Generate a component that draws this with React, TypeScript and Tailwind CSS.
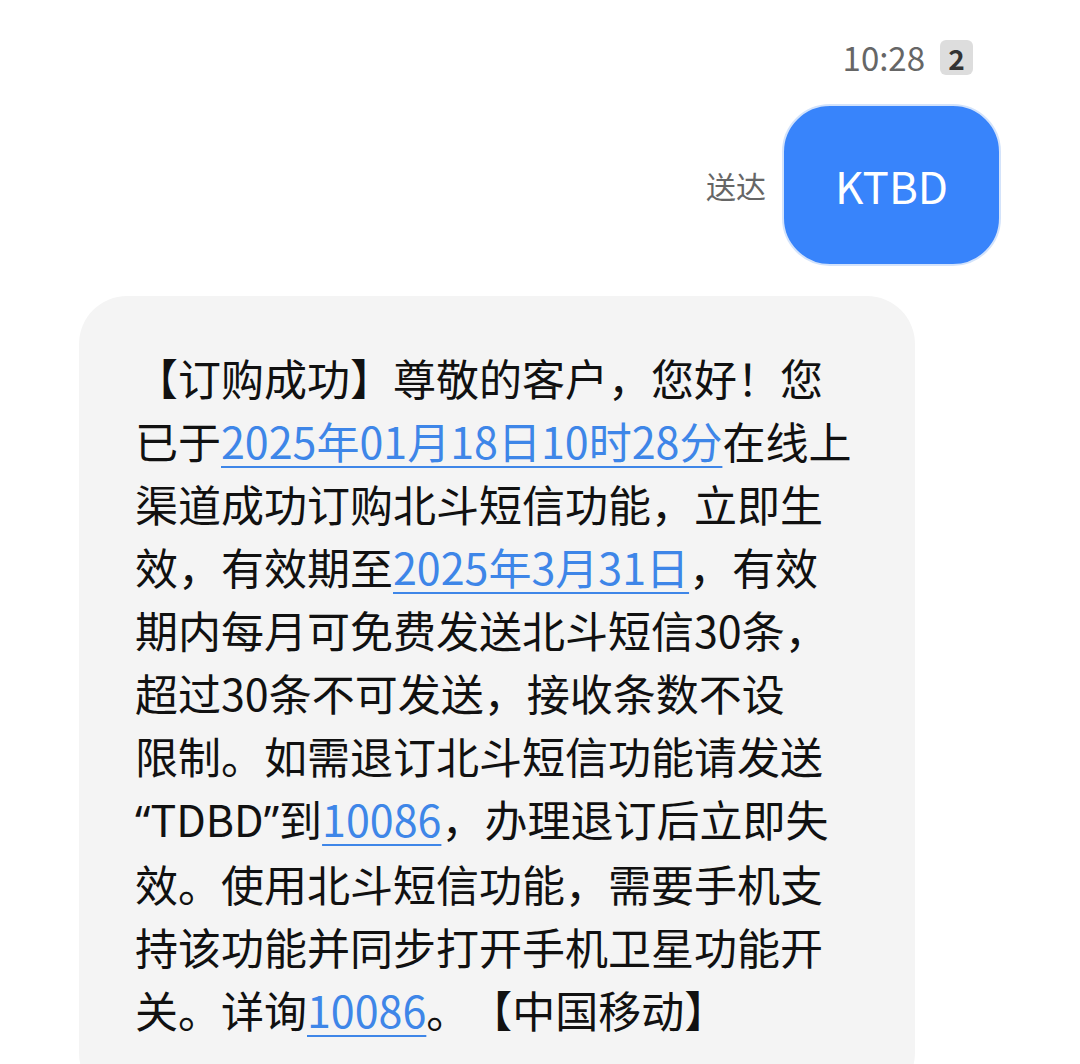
import React from 'react';

const Link: React.FC<{ children: React.ReactNode }> = ({ children }) => (
  <span className="text-[#3e86e8] underline decoration-[#3e86e8] decoration-2 underline-offset-[7px]">
    {children}
  </span>
);

// latin-width quote marks, as in the reference
const Q: React.FC<{ children: React.ReactNode }> = ({ children }) => (
  <span className="font-['Noto_Sans',sans-serif]">{children}</span>
);

const lines: React.ReactNode[] = [
  <>【订购成功】尊敬的客户，您好！您</>,
  <>已于<Link>2025年01月18日10时28分</Link>在线上</>,
  <>渠道成功订购北斗短信功能，立即生</>,
  <>效，有效期至<Link>2025年3月31日</Link>，有效</>,
  <>期内每月可免费发送北斗短信30条，</>,
  <>超过30条不可发送，接收条数不设</>,
  <>限制。如需退订北斗短信功能请发送</>,
  <><Q>“</Q>TDBD<Q>”</Q>到<Link>10086</Link>，办理退订后立即失</>,
  <>效。使用北斗短信功能，需要手机支</>,
  <>持该功能并同步打开手机卫星功能开</>,
  <>关。详询<Link>10086</Link>。【中国移动】</>,
];

export default function App() {
  return (
    <div className="w-[1080px] h-[1064px] overflow-hidden bg-white font-['Noto_Sans_CJK_SC','Noto_Sans',sans-serif]">
      {/* time + sim badge */}
      <div className="flex justify-end items-center gap-[15px] pt-[40px] pr-[107px]">
        <span className="text-[33px] leading-[35px] text-[#666666]">10:28</span>
        <span className="w-[33px] h-[35px] rounded-[6px] bg-[#dddddd] flex items-center justify-center text-[28px] font-bold text-[#333333]">
          2
        </span>
      </div>

      {/* outgoing message */}
      <div className="flex justify-end items-center gap-[16px] mt-[29px] pr-[79px]">
        <span className="text-[30px] text-[#666666]">送达</span>
        <div className="w-[219px] h-[162px] rounded-[48px] bg-[#3884fb] border-2 border-[#d3e3fb] flex items-center justify-center text-white text-[44px]">
          KTBD
        </div>
      </div>

      {/* incoming message */}
      <div className="ml-[79px] mt-[30px] w-[836px] rounded-[48px] bg-[#f4f4f4] pl-[56px] pt-[50px] pb-[60px] text-[43px] leading-[63px] text-[#111111] [text-spacing-trim:space-all]">
        {lines.map((l, i) => (
          <div key={i} className="whitespace-nowrap">
            {l}
          </div>
        ))}
      </div>
    </div>
  );
}
